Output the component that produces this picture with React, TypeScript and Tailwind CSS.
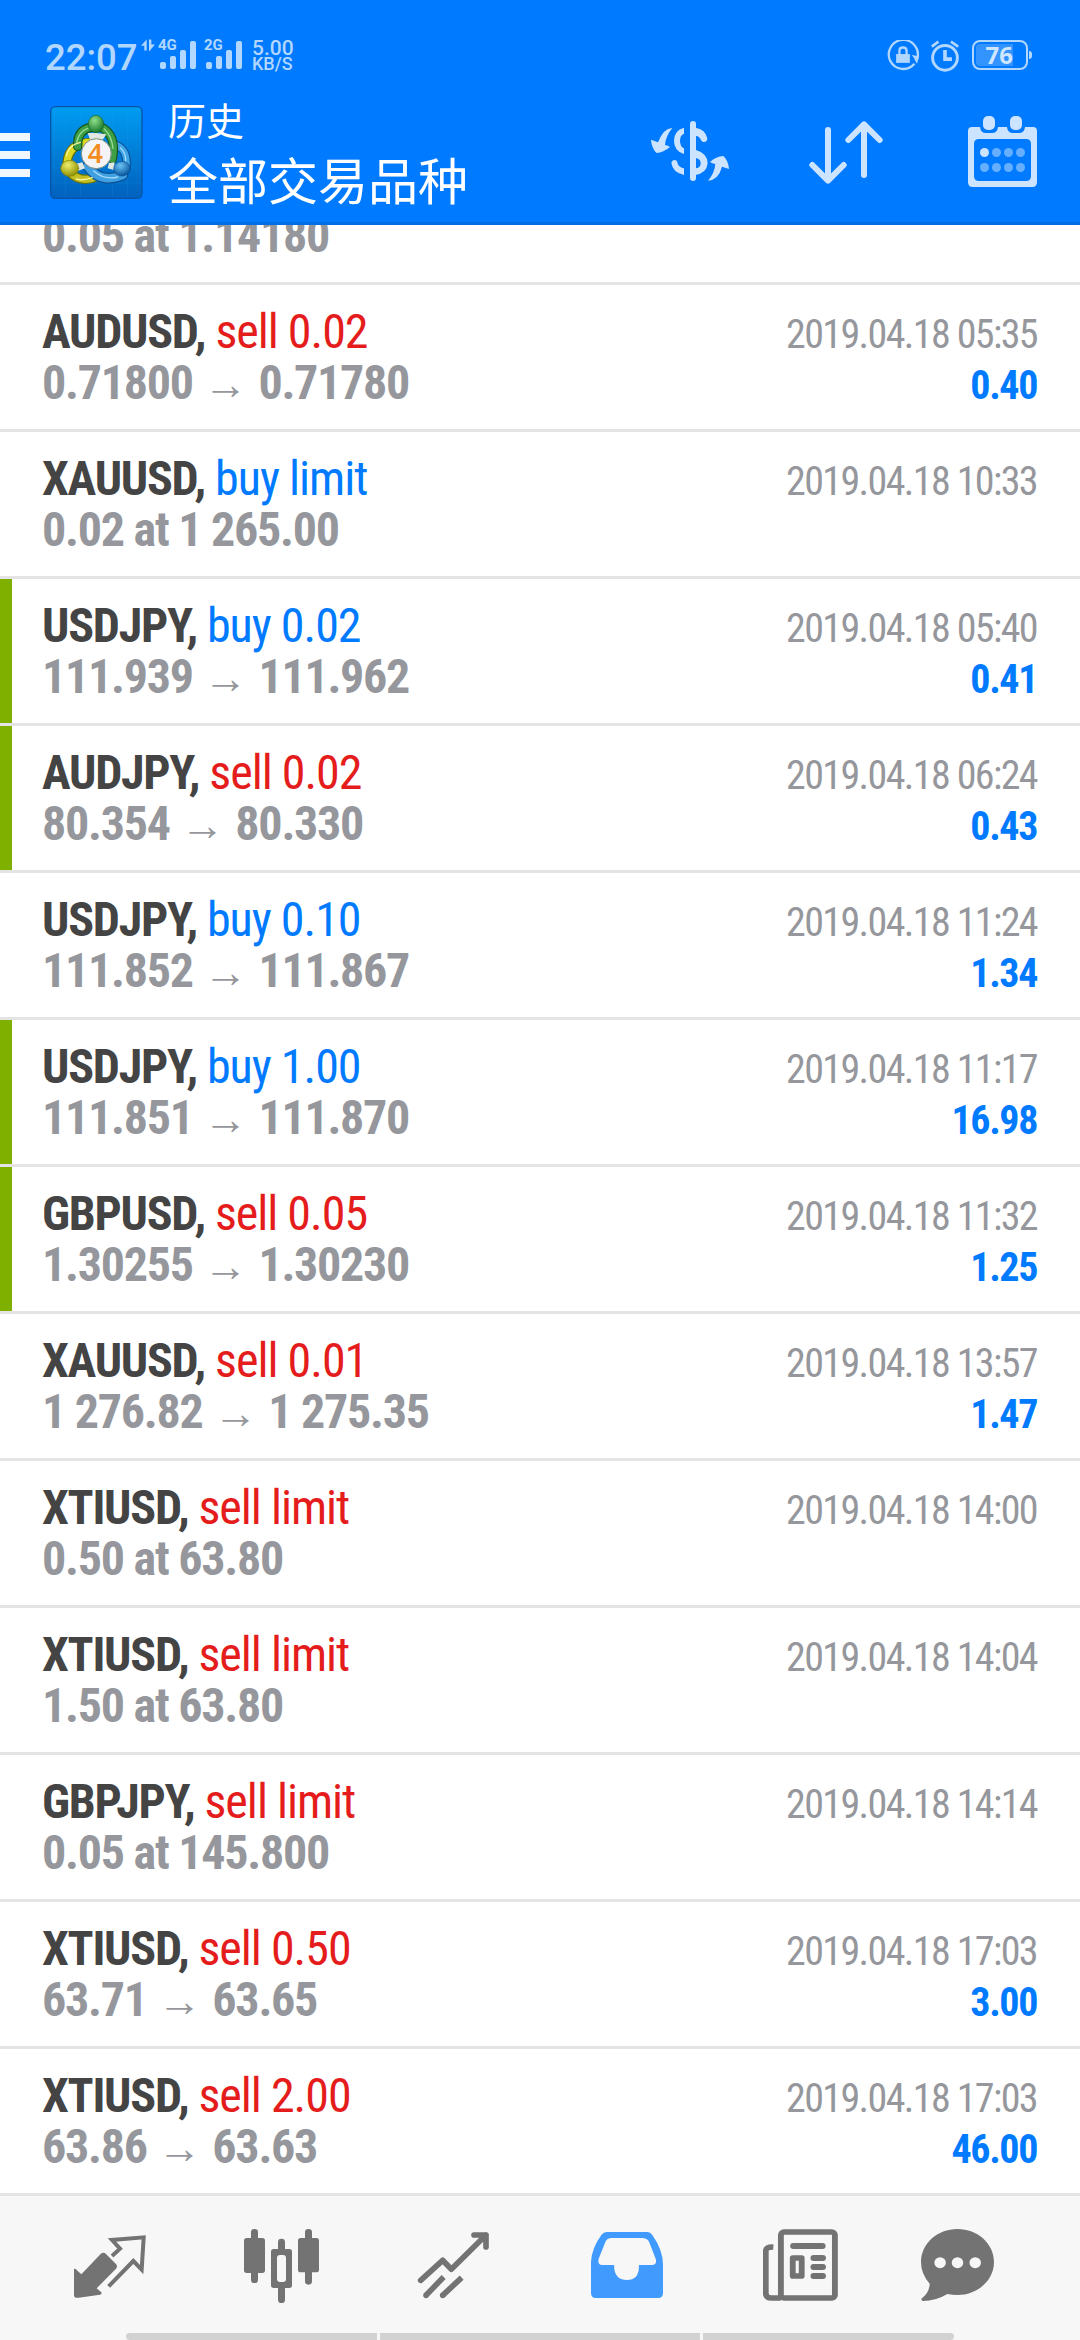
import type { ReactNode } from "react";

type Deal = {
  symbol: string;
  side: "buy" | "sell";
  volume: string;
  detail: string;
  to?: string;
  time: string;
  profit?: string;
  marked?: boolean;
};

const deals: Deal[] = [
  { symbol: "AUDUSD", side: "sell", volume: "0.02", detail: "0.71800", to: "0.71780", time: "2019.04.18 05:35", profit: "0.40" },
  { symbol: "XAUUSD", side: "buy", volume: "limit", detail: "0.02 at 1 265.00", time: "2019.04.18 10:33" },
  { symbol: "USDJPY", side: "buy", volume: "0.02", detail: "111.939", to: "111.962", time: "2019.04.18 05:40", profit: "0.41", marked: true },
  { symbol: "AUDJPY", side: "sell", volume: "0.02", detail: "80.354", to: "80.330", time: "2019.04.18 06:24", profit: "0.43", marked: true },
  { symbol: "USDJPY", side: "buy", volume: "0.10", detail: "111.852", to: "111.867", time: "2019.04.18 11:24", profit: "1.34" },
  { symbol: "USDJPY", side: "buy", volume: "1.00", detail: "111.851", to: "111.870", time: "2019.04.18 11:17", profit: "16.98", marked: true },
  { symbol: "GBPUSD", side: "sell", volume: "0.05", detail: "1.30255", to: "1.30230", time: "2019.04.18 11:32", profit: "1.25", marked: true },
  { symbol: "XAUUSD", side: "sell", volume: "0.01", detail: "1 276.82", to: "1 275.35", time: "2019.04.18 13:57", profit: "1.47" },
  { symbol: "XTIUSD", side: "sell", volume: "limit", detail: "0.50 at 63.80", time: "2019.04.18 14:00" },
  { symbol: "XTIUSD", side: "sell", volume: "limit", detail: "1.50 at 63.80", time: "2019.04.18 14:04" },
  { symbol: "GBPJPY", side: "sell", volume: "limit", detail: "0.05 at 145.800", time: "2019.04.18 14:14" },
  { symbol: "XTIUSD", side: "sell", volume: "0.50", detail: "63.71", to: "63.65", time: "2019.04.18 17:03", profit: "3.00" },
  { symbol: "XTIUSD", side: "sell", volume: "2.00", detail: "63.86", to: "63.63", time: "2019.04.18 17:03", profit: "46.00" },
];

function DealRow({ deal }: { deal: Deal }) {
  return (
    <li className="flex h-[147px] border-b-[3px] border-[#e4e4e4] bg-white pr-[43px]">
      <span className={deal.marked ? "w-3 bg-[#7fb000]" : "w-3"} />
      <div className="flex-1 pt-[21px] pl-[30px] text-[48px] leading-[51px] whitespace-nowrap">
        <p>
          <span className="font-bold tracking-[-1.25px] text-[#444444]">{deal.symbol},</span>{" "}
          <span className={deal.side === "buy" ? "-ml-px tracking-[-1px] text-[#007aff]" : "-ml-px tracking-[-1px] text-[#e51c1c]"}>
            {deal.side} {deal.volume}
          </span>
        </p>
        <p className="font-bold tracking-[-1.25px] text-[#95979c]">
          {deal.detail}
          {deal.to && (
            <>
              {" "}
              <span className="inline-block w-[46px] text-center font-['Liberation_Sans'] text-[44px] leading-none tracking-normal">
                <span className="-mx-2">→</span>
              </span>{" "}
              {deal.to}
            </>
          )}
        </p>
      </div>
      <div className="pt-6 text-right text-[40px] leading-[51px]">
        <p className="tracking-[-1.6px] text-[#95979c]">{deal.time}</p>
        {deal.profit && <p className="font-bold tracking-[-1.4px] text-[#007aff]">{deal.profit}</p>}
      </div>
    </li>
  );
}

function SignalBars({ label, children }: { label: string; children?: ReactNode }) {
  return (
    <div className="relative flex h-[29px] items-end gap-1">
      <span className="absolute -left-[2px] top-0 text-[15px] leading-[11px] font-bold">{label}</span>
      <i className="h-[7px] w-[6px] rounded-[2px] bg-current" />
      <i className="h-[13px] w-[6px] rounded-[2px] bg-current" />
      <i className="h-[19px] w-[6px] rounded-[2px] bg-current" />
      <i className="h-[28px] w-[6px] rounded-[2px] bg-current" />
      {children}
    </div>
  );
}

function StatusBar() {
  return (
    <div className="flex h-[72px] items-end pl-[45px] font-[Roboto] text-[#b2d7ff]">
      <span className="w-[96px] text-[36.500px] leading-[28px] font-medium">22:07</span>
      <svg className="mb-[20px] h-[13px] w-[14px]" viewBox="302 26 42 38" fill="currentColor">
        <path d="M302 46L319 27V60H312V46ZM326 27H333V42H344L326 63Z" />
      </svg>
      <div className="mb-[3px] ml-[5px] flex gap-[10px]">
        <SignalBars label="4G" />
        <SignalBars label="2G" />
      </div>
      <div className="ml-[10px] flex flex-col font-medium">
        <span className="text-[21px] leading-[16px]">5.00</span>
        <span className="text-[18px] leading-[16px]">KB/S</span>
      </div>
      <div className="ml-auto flex items-end pr-[48px]">
        <svg className="h-8 w-8" viewBox="20 29 98 98" fill="none">
          <path d="M104 102A44.5 44.5 0 1 1 112 88" stroke="currentColor" strokeWidth="7" />
          <path d="M96 75L118 79L112 102Z" fill="currentColor" />
          <path d="M104 88L96 78" stroke="#007aff" strokeWidth="3" />
          <path d="M48 72H90V99H48Z" fill="currentColor" />
          <path d="M58 74V62Q58 52 69 52T80 62V74" stroke="currentColor" strokeWidth="7" />
        </svg>
        <svg className="ml-[11px] h-8 w-[30px]" viewBox="150 30 90 97" fill="none" stroke="currentColor">
          <circle cx="195" cy="84" r="37.5" strokeWidth="9" />
          <path d="M195 60V88H216" strokeWidth="11" />
          <path d="M155 50L175 35M235 50L213 35" strokeWidth="8" />
        </svg>
        <div className="mb-[2px] ml-[12px] flex h-[30px] w-[56px] items-center rounded-[8px] border-2 border-current pl-[2px]">
          <span className="flex h-[22px] w-[37px] items-center justify-end rounded-l-[4px] bg-white/20 font-['Noto_Sans'] text-[24px] leading-none font-bold text-[#cfe6ff]">
            76
          </span>
        </div>
        <i className="mb-[13px] ml-px h-[8px] w-[3px] rounded-r bg-current" />
      </div>
    </div>
  );
}

function AppLogo() {
  return (
    <svg className="h-[93px] w-[93px]" viewBox="149 19 279 279" fill="none" strokeLinecap="round">
      <defs>
        <linearGradient id="tile" x1="0" y1="0" x2="0" y2="1">
          <stop offset="0" stopColor="#009cf2" />
          <stop offset="1" stopColor="#0061bd" />
        </linearGradient>
        <radialGradient id="green" cx=".4" cy=".3" r=".7">
          <stop offset="0" stopColor="#8fe08a" />
          <stop offset="1" stopColor="#1b7a2c" />
        </radialGradient>
        <radialGradient id="yellow" cx=".4" cy=".3" r=".7">
          <stop offset="0" stopColor="#f0ee6a" />
          <stop offset="1" stopColor="#8f9205" />
        </radialGradient>
        <radialGradient id="blue" cx=".4" cy=".3" r=".7">
          <stop offset="0" stopColor="#6cc4f4" />
          <stop offset="1" stopColor="#07559f" />
        </radialGradient>
      </defs>
      <rect x="151" y="21" width="274" height="275" rx="14" fill="url(#tile)" stroke="#0655a8" strokeWidth="4" />
      <path d="M195 26V290M240 26V290M336 26V290M381 26V290M155 68H421M155 115H421M155 205H421M155 250H421" stroke="#2aa5ee" strokeOpacity=".25" strokeWidth="2" />
      <path d="M348 136Q384 152 378 205" stroke="#0a5396" strokeWidth="26" />
      <path d="M348 136Q384 152 378 205" stroke="#3fa5e6" strokeWidth="19" />
      <path d="M275 128Q205 128 200 190" stroke="#6d7205" strokeWidth="28" />
      <path d="M275 128Q205 128 200 190" stroke="#dcd823" strokeWidth="21" />
      <path d="M205 215Q240 252 288 232" stroke="#6d7205" strokeWidth="28" />
      <path d="M205 215Q240 252 288 232" stroke="#c3bf22" strokeWidth="21" />
      <path d="M262 200Q300 254 368 226" stroke="#0a5396" strokeWidth="32" />
      <path d="M262 200Q300 254 368 226" stroke="#3f9fe0" strokeWidth="25" />
      <path d="M232 140Q230 92 270 83H304Q350 108 336 178" stroke="#14571f" strokeWidth="28" />
      <path d="M232 140Q230 92 270 83H304Q350 108 336 178" stroke="#3f9f45" strokeWidth="21" />
      <path d="M229 130Q234 96 262 86M312 88Q334 108 338 146" stroke="#9bdc97" strokeWidth="4" />
      <path d="M198 168Q204 136 240 128M228 238Q250 244 276 234" stroke="#f8f59a" strokeWidth="4" />
      <path d="M280 214Q312 242 352 232M360 144Q378 160 376 184" stroke="#a5dafa" strokeWidth="4" />
      <path d="M262 100L270 122H306L318 104L288 100ZM228 192L246 188L254 206L232 214ZM342 188L326 190L322 206L344 212Z" fill="#dfe9e2" />
      <ellipse cx="287" cy="73" rx="23" ry="26" fill="url(#green)" stroke="#17682a" strokeWidth="2" />
      <ellipse cx="208" cy="206" rx="27" ry="24" fill="url(#yellow)" stroke="#7b7f08" strokeWidth="2" />
      <ellipse cx="365" cy="207" rx="25" ry="22" fill="url(#blue)" stroke="#0b4f93" strokeWidth="2" />
      <circle cx="288" cy="162" r="45" fill="#f4f4f6" stroke="#7b8a80" strokeWidth="3" />
      <text x="285" y="190" textAnchor="middle" fontFamily="Noto Sans" fontWeight="600" fontSize="80" fill="#f28c1e">
        4
      </text>
    </svg>
  );
}

function Header() {
  return (
    <header className="flex h-[225px] flex-col border-b-[3px] border-[#006fe5] bg-[#007aff]">
      <StatusBar />
      <div className="flex flex-1 items-start text-[#cce4ff]">
        <div className="mt-[61px] flex w-[30px] flex-col gap-[10px]">
          <i className="h-2 bg-[#f0f7ff]" />
          <i className="h-2 bg-[#f0f7ff]" />
          <i className="h-2 bg-[#f0f7ff]" />
        </div>
        <div className="mt-[34px] ml-[20px]">
          <AppLogo />
        </div>
        <div className="mt-[21px] ml-[25px] flex flex-1 flex-col font-['Noto_Sans_CJK_SC'] font-normal text-white">
          <span className="text-[38px] leading-[52px]">历史</span>
          <span className="text-[50px] leading-[66px]">全部交易品种</span>
        </div>
        <svg className="mt-12 h-[62px] w-[80px]" viewBox="30 45 240 186" fill="currentColor">
          <rect x="150" y="48" width="18" height="180" rx="9" />
          <path d="M132 68V86Q120 90 120 107T132 130V147Q102 138 102 107T132 68Z" />
          <path d="M166 68Q196 72 202 100Q202 112 190 111Q184 110 180 100Q177 93 166 92Z" />
          <path d="M94 174Q96 165 104 165Q112 166 113 176Q118 187 132 190V210Q98 202 94 174Z" />
          <path fillRule="evenodd" d="M166 134Q203 145 203 175Q200 205 166 210ZM168 159V190Q182 188 182 175T168 159Z" />
          <path d="M97 69Q70 70 54 112L33 104Q35 130 50 144Q70 143 90 126Q85 121 75 120Q77 93 97 69Z" />
          <path d="M204 227Q236 224 246 185L267 192Q265 166 250 153Q228 155 210 171Q216 176 226 177Q224 204 204 227Z" />
        </svg>
        <svg className="mt-12 ml-[79px] h-[65px] w-[74px]" viewBox="507 45 222 195" fill="none" stroke="currentColor" strokeWidth="18" strokeLinecap="round" strokeLinejoin="round">
          <path d="M564 75V225M517 180L564 227L611 180" />
          <path d="M672 210V60M625 105L672 58L719 105" />
        </svg>
        <svg className="mt-[43px] mr-[43px] ml-[85px] h-[72px] w-[69px]" viewBox="264 255 207 216" fill="currentColor">
          <path fillRule="evenodd" d="M276 291H300Q302 309 318 309H336Q352 309 354 291H381Q383 309 399 309H417Q433 309 435 291H459Q471 291 471 303V457Q471 471 457 471H278Q264 471 264 457V303Q264 291 276 291ZM297 327Q282 327 282 342V438Q282 453 297 453H438Q453 453 453 438V342Q453 327 438 327Z" />
          <rect x="309" y="258" width="36" height="42" rx="15" />
          <rect x="390" y="258" width="36" height="42" rx="15" />
          <circle cx="313.500" cy="367.500" r="13.500" />
          <g opacity=".5">
            <circle cx="349.500" cy="367.500" r="13.500" />
            <circle cx="385.500" cy="367.500" r="13.500" />
            <circle cx="421.500" cy="367.500" r="13.500" />
            <circle cx="313.500" cy="412.500" r="13.500" />
            <circle cx="349.500" cy="412.500" r="13.500" />
            <circle cx="385.500" cy="412.500" r="13.500" />
            <circle cx="421.500" cy="412.500" r="13.500" />
          </g>
        </svg>
      </div>
    </header>
  );
}

function BottomNav() {
  return (
    <nav className="flex h-[144px] flex-col bg-[#f7f7f7] text-[#737373]">
      <div className="flex h-[137px] items-start">
        <svg className="mt-[38px] ml-[73px] h-[65px] w-[74px]" viewBox="39 42 222 195">
          <path fill="currentColor" d="M42 147Q46 145 50 150L64 163L122 102Q130 95 138 102L168 132Q174 139 168 146L110 205L124 217Q126 223 120 224L56 233Q42 236 42 224Z" />
          <path fill="none" stroke="currentColor" strokeWidth="12" d="M156 108L180 86L156 60L251 52L245 149L220 123L146 199" />
        </svg>
        <svg className="mt-[33px] ml-[96px] h-[74px] w-[77px]" viewBox="549 27 231 222" fill="currentColor">
          <rect x="573" y="27" width="21" height="162" rx="10" />
          <rect x="552" y="54" width="63" height="105" rx="8" />
          <rect x="735" y="27" width="21" height="167" rx="10" />
          <rect x="714" y="54" width="63" height="103" rx="8" />
          <path d="M654 90V66Q654 56 664.500 56T675 66V90ZM654 200V239Q654 249 664.500 249T675 239V200Z" />
          <path fillRule="evenodd" d="M641 87H688Q696 87 696 95V196Q696 204 688 204H641Q633 204 633 196V95Q633 87 641 87ZM660 105Q651 105 651 114V177Q651 186 660 186H669Q678 186 678 177V114Q678 105 669 105Z" />
        </svg>
        <svg className="mt-[35px] ml-[97px] h-[68px] w-[73px]" viewBox="1071 33 219 204" fill="none" stroke="currentColor" strokeWidth="17">
          <path strokeLinecap="round" strokeLinejoin="round" d="M1082 181L1148 121L1174 148L1278 45M1242 45H1278V81" />
          <path d="M1098 226L1151 171M1148 226L1205 173" />
          <path strokeLinecap="round" d="M1098 226H1098.100M1148 226H1148.100" />
        </svg>
        <svg className="mt-9 ml-[101px] h-[66px] w-[72px]" viewBox="148 156 209 198" preserveAspectRatio="none" fill="#419bff">
          <path fillRule="evenodd" d="M194 156H312Q320 156 326 165Q357 210 357 255V339Q357 354 343 354H162Q148 354 148 339V245Q150 205 178 165Q184 156 194 156ZM208 174Q194 175 190 185L170 237Q167 255 180 255H215Q215 300 252 300T287 255H325Q340 255 336 237L317 187Q313 175 298 174Z" />
        </svg>
        <svg className="mt-[33px] ml-[100px] h-[72px] w-[75px]" viewBox="648 147 218 216" preserveAspectRatio="none" fill="none" stroke="currentColor">
          <rect x="700" y="156" width="157" height="198" rx="9" strokeWidth="17" />
          <path d="M678 201Q656 200 656 214V338Q656 354 672 354H700" strokeWidth="17" />
          <path d="M736 198H821M795 234H822M795 261H822M795 288H822" strokeWidth="18" strokeLinecap="round" />
          <rect x="734.500" y="234" width="26" height="54" strokeWidth="17" strokeLinejoin="round" />
        </svg>
        <svg className="mt-[33px] ml-[83px] h-[72px] w-[73px]" viewBox="1108 147 210 216" preserveAspectRatio="none" fill="currentColor">
          <path d="M1213 147C1271 147 1318 191 1318 246S1271 345 1213 345Q1198 345 1184 342Q1150 363 1114 363Q1106 361 1111 354Q1132 338 1133 311Q1108 282 1108 246C1108 191 1155 147 1213 147Z" />
          <g fill="#f7f7f7">
            <circle cx="1163" cy="248" r="16.500" />
            <circle cx="1213" cy="248" r="16.500" />
            <circle cx="1264" cy="248" r="16.500" />
          </g>
        </svg>
      </div>
      <div className="flex h-[7px] gap-[3px] px-[126px]">
        <i className="flex-1 rounded-l-[4px] bg-[#d2d2d2]" />
        <i className="w-[320px] bg-[#d2d2d2]" />
        <i className="flex-1 rounded-r-[4px] bg-[#d2d2d2]" />
      </div>
    </nav>
  );
}

export default function App() {
  return (
    <div className="flex h-[2340px] w-[1080px] flex-col overflow-hidden bg-white font-['Roboto_Condensed',Roboto,sans-serif]">
      <Header />
      <ul className="flex flex-col">
        <li className="h-[60px] overflow-hidden border-b-[3px] border-[#e4e4e4] pl-[42px]">
          <p className="-mt-[15px] text-[48px] leading-[51px] font-bold tracking-[-1.25px] text-[#95979c]">0.05 at 1.14180</p>
        </li>
        {deals.map((deal, i) => (
          <DealRow key={i} deal={deal} />
        ))}
      </ul>
      <BottomNav />
    </div>
  );
}
